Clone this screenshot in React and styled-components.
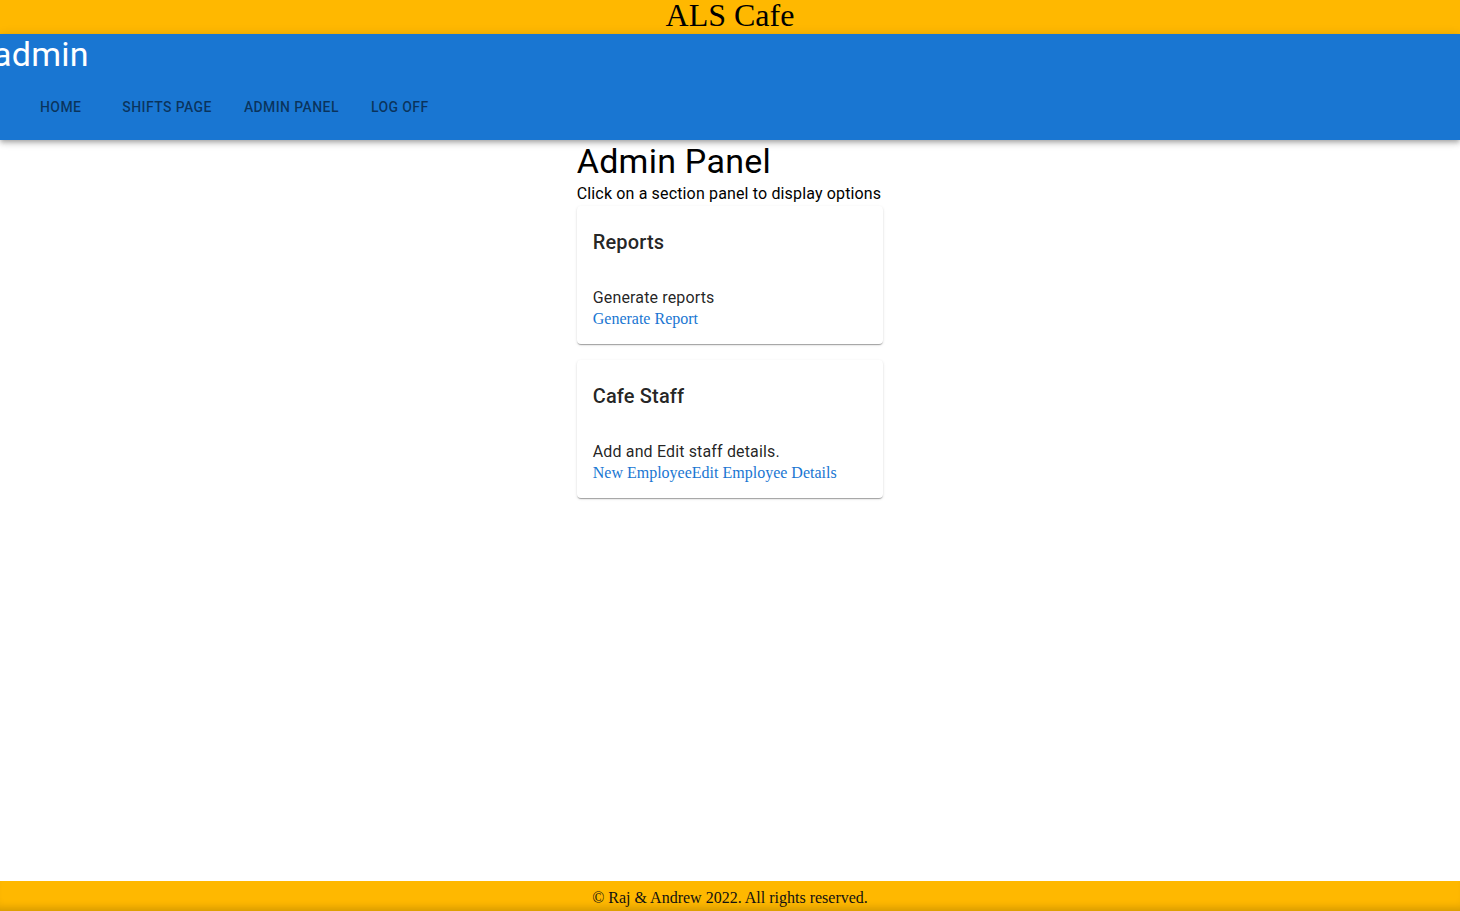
import React from "react";
import styled, { createGlobalStyle } from "styled-components";

const GlobalStyle = createGlobalStyle`
  html, body { margin: 0; padding: 0; }
  body {
    font-family: Roboto, "Liberation Sans", Arial, sans-serif;
    background: #ffffff;
    overflow: hidden;
  }
`;

const Page = styled.div`
  display: flex;
  flex-direction: column;
  min-height: 100vh;
`;

const Banner = styled.header`
  height: 34px;
  background: #ffb800;
  text-align: center;
  font-family: "Liberation Serif", "Times New Roman", serif;
  font-size: 32px;
  line-height: 30px;
  color: #000;
`;

const AppBar = styled.div`
  background: #1976d2;
  color: #fff;
  padding-bottom: 1px;
  box-shadow: 0px 2px 4px -1px rgba(0,0,0,0.2), 0px 4px 5px 0px rgba(0,0,0,0.14), 0px 1px 10px 0px rgba(0,0,0,0.12);
  position: relative;
  z-index: 1;
`;

const UserName = styled.h4`
  margin: 0 0 0 -7px;
  font-family: Roboto, sans-serif;
  font-weight: 400;
  font-size: 34px;
  line-height: 40px;
  letter-spacing: 0.00735em;
`;

const Toolbar = styled.nav`
  display: flex;
  align-items: center;
  height: 65px;
  padding-left: 24px;
`;

const NavButton = styled.button`
  background: none;
  border: none;
  padding: 6px 16px;
  margin-right: ${(p) => (p.$extra ? "9px" : "0")};
  font-family: Roboto, sans-serif;
  font-weight: 500;
  font-size: 14px;
  line-height: 24px;
  letter-spacing: 0.02857em;
  text-transform: uppercase;
  color: rgba(0, 0, 0, 0.56);
  cursor: pointer;
`;

const Main = styled.main`
  flex: 1;
  display: flex;
  justify-content: center;
`;

const Column = styled.div`
  width: fit-content;
  display: flex;
  flex-direction: column;
`;

const Title = styled.h4`
  margin: 0;
  font-weight: 400;
  font-size: 34px;
  line-height: 42px;
  letter-spacing: 0.00735em;
  color: #000;
`;

const Subtitle = styled.p`
  margin: 0;
  padding-right: 2px;
  font-size: 16px;
  line-height: 24px;
  letter-spacing: 0.00938em;
  color: #000;
`;

const CardList = styled.div`
  display: flex;
  flex-direction: column;
  gap: 16px;
`;

const Card = styled.section`
  background: #fff;
  border-radius: 4px;
  padding: 20px 16px 16px;
  box-shadow: 0px 2px 1px -1px rgba(0,0,0,0.2), 0px 1px 1px 0px rgba(0,0,0,0.14), 0px 1px 3px 0px rgba(0,0,0,0.12);
`;

const CardTitle = styled.h6`
  margin: 0 0 28px;
  font-weight: 500;
  font-size: 20px;
  line-height: 32px;
  letter-spacing: 0.0075em;
  color: rgba(0, 0, 0, 0.87);
`;

const CardText = styled.p`
  margin: 0;
  font-size: 16px;
  line-height: 24px;
  letter-spacing: 0.00938em;
  color: rgba(0, 0, 0, 0.87);
`;

const Links = styled.div`
  font-family: "Liberation Serif", "Times New Roman", serif;
  font-size: 16px;
  line-height: normal;
`;

const CardLink = styled.a`
  color: #1976d2;
  text-decoration: none;
`;

const Footer = styled.footer`
  height: 30px;
  box-sizing: border-box;
  padding-top: 3px;
  background: #ffb800;
  box-shadow: inset 0 -9px 8px -6px rgba(0, 0, 0, 0.18);
  text-align: center;
  font-family: "Liberation Serif", "Times New Roman", serif;
  font-size: 16px;
  line-height: 27px;
  color: #111;
`;

const sections = [
  { title: "Reports", text: "Generate reports", links: ["Generate Report"] },
  { title: "Cafe Staff", text: "Add and Edit staff details.", links: ["New Employee", "Edit Employee Details"] },
];

export default function App() {
  return (
    <Page>
      <GlobalStyle />
      <Banner>ALS Cafe</Banner>
      <AppBar>
        <UserName>admin</UserName>
        <Toolbar>
          <NavButton $extra>Home</NavButton>
          <NavButton>Shifts Page</NavButton>
          <NavButton>Admin Panel</NavButton>
          <NavButton>Log Off</NavButton>
        </Toolbar>
      </AppBar>
      <Main>
        <Column>
          <Title>Admin Panel</Title>
          <Subtitle>Click on a section panel to display options</Subtitle>
          <CardList>
            {sections.map((s) => (
              <Card key={s.title}>
                <CardTitle>{s.title}</CardTitle>
                <CardText>{s.text}</CardText>
                <Links>
                  {s.links.map((l) => (
                    <CardLink key={l} href="#">{l}</CardLink>
                  ))}
                </Links>
              </Card>
            ))}
          </CardList>
        </Column>
      </Main>
      <Footer>© Raj &amp; Andrew 2022. All rights reserved.</Footer>
    </Page>
  );
}
